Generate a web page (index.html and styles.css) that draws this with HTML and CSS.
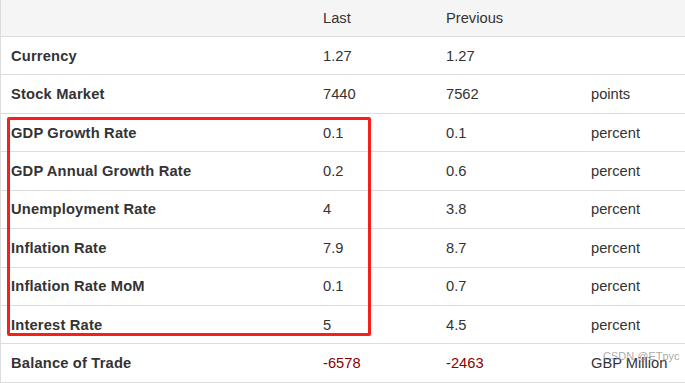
FILE: index.html
```html
<!DOCTYPE html>
<html>
<head>
<meta charset="utf-8">
<link rel="stylesheet" href="styles.css">
</head>
<body>
<div class="wrap">
  <table class="tbl">
    <thead>
      <tr class="head">
        <th class="c-name"></th>
        <th class="c-last">Last</th>
        <th class="c-prev">Previous</th>
        <th class="c-unit"></th>
      </tr>
    </thead>
    <tbody>
      <tr><td class="c-name">Currency</td><td>1.27</td><td>1.27</td><td></td></tr>
      <tr><td class="c-name">Stock Market</td><td>7440</td><td>7562</td><td>points</td></tr>
      <tr><td class="c-name">GDP Growth Rate</td><td>0.1</td><td>0.1</td><td>percent</td></tr>
      <tr><td class="c-name">GDP Annual Growth Rate</td><td>0.2</td><td>0.6</td><td>percent</td></tr>
      <tr><td class="c-name">Unemployment Rate</td><td>4</td><td>3.8</td><td>percent</td></tr>
      <tr><td class="c-name">Inflation Rate</td><td>7.9</td><td>8.7</td><td>percent</td></tr>
      <tr><td class="c-name">Inflation Rate MoM</td><td>0.1</td><td>0.7</td><td>percent</td></tr>
      <tr><td class="c-name">Interest Rate</td><td>5</td><td>4.5</td><td>percent</td></tr>
      <tr><td class="c-name">Balance of Trade</td><td class="neg">-6578</td><td class="neg">-2463</td><td>GBP Million</td></tr>
    </tbody>
  </table>
  <div class="highlight"></div>
  <div class="watermark">CSDN @ETpyc</div>
</div>
</body>
</html>
```
FILE: styles.css
```css
html, body {
  margin: 0;
  padding: 0;
  background: #fff;
  overflow: hidden;
}
.wrap {
  position: relative;
  width: 685px;
  height: 383px;
  overflow: hidden;
}
.tbl {
  border-collapse: collapse;
  width: 720px;
  table-layout: fixed;
  font-family: "Liberation Sans", Arial, sans-serif;
  font-size: 14.7px;
  color: #333;
  border-left: 1px solid #ddd;
}
.tbl th, .tbl td {
  text-align: left;
  padding: 0;
  border-bottom: 1px solid #ddd;
  white-space: nowrap;
  vertical-align: middle;
}
.head th {
  height: 35px;
  background: #f5f5f5;
  font-weight: normal;
  padding-bottom: 1px;
}
.tbl td {
  height: 37.43px;
}
.c-name {
  width: 312px;
  padding-left: 10px !important;
  font-weight: bold;
  letter-spacing: 0.18px;
}
.tbl th:nth-child(2), .tbl td:nth-child(2) { width: 123px; }
.tbl th:nth-child(3), .tbl td:nth-child(3) { width: 145px; }
.neg { color: #8b0000; }
.highlight {
  position: absolute;
  left: 7px;
  top: 117px;
  width: 358px;
  height: 213px;
  border: 3px solid #f5201c;
  border-radius: 2px;
}
.watermark {
  position: absolute;
  left: 603px;
  top: 350px;
  font-family: "Liberation Sans", Arial, sans-serif;
  font-size: 11px;
  color: rgba(140, 140, 140, 0.75);
}
```
